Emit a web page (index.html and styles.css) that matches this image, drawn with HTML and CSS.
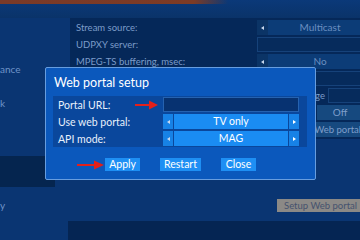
FILE: index.html
```html
<!DOCTYPE html>
<html lang="en">
<head>
    <meta charset="UTF-8">
    <meta name="viewport" content="width=device-width, initial-scale=1.0">
    <title>Web portal setup</title>
    <link rel="stylesheet" href="styles.css">
</head>
<body>

<div class="screen">
    <div class="top"><div class="glow"></div></div>

    <div class="main">
        <div class="menu">
            <div class="menu-item"></div>
            <div class="menu-item">ance</div>
            <div class="menu-item">k</div>
            <div class="menu-item"></div>
            <div class="menu-item"><div class="menu-sel"></div></div>
            <div class="menu-item">y</div>
        </div>

        <div class="settings">
            <div class="panel">
                <div class="row">
                    <div class="row-label">Stream source:</div>
                    <div class="row-value">
                        <div class="arrow-box"><span class="tri-left"></span></div>
                        <div class="value-box">Multicast</div>
                    </div>
                </div>
                <div class="row">
                    <div class="row-label">UDPXY server:</div>
                    <div class="row-value"><div class="input-box"></div></div>
                </div>
                <div class="row">
                    <div class="row-label">MPEG-TS buffering, msec:</div>
                    <div class="row-value">
                        <div class="arrow-box"><span class="tri-left"></span></div>
                        <div class="value-box">No</div>
                    </div>
                </div>
                <div class="row">
                    <div class="row-label">Timeshift path:</div>
                    <div class="row-value"><div class="input-box"></div></div>
                </div>
                <div class="row row-wide">
                    <div class="row-label right">Use default storage</div>
                    <div class="row-value"><div class="input-box"></div></div>
                </div>
                <div class="row row-mid">
                    <div class="row-label">Web portal:</div>
                    <div class="row-value"><div class="flat-box">Off</div></div>
                </div>
                <div class="row row-btn">
                    <div class="row-label">Web portal:</div>
                    <div class="row-value"><div class="flat-box left">Setup Web portal</div></div>
                </div>
            </div>

            <div class="action">
                <button class="grey-btn">Setup Web portal</button>
            </div>
            <div class="footer-bar"></div>
        </div>
    </div>

    <div class="dialog">
        <div class="dialog-title">Web portal setup</div>
        <div class="dialog-panel">
            <div class="drow">
                <div class="dlabel">
                    <span>Portal URL:</span>
                    <svg class="red-arrow" width="23" height="10" viewBox="0 0 23 10">
                        <rect x="0" y="4" width="16" height="2" fill="#e3201b"/>
                        <polygon points="14,0.5 23,5 14,9.5" fill="#e3201b"/>
                    </svg>
                </div>
                <div class="dinput"></div>
            </div>
            <div class="drow">
                <div class="dlabel"><span>Use web portal:</span></div>
                <div class="dselect">
                    <div class="darrow"><span class="tri-left"></span></div>
                    <div class="dvalue">TV only</div>
                    <div class="darrow"><span class="tri-right"></span></div>
                </div>
            </div>
            <div class="drow">
                <div class="dlabel"><span>API mode:</span></div>
                <div class="dselect">
                    <div class="darrow"><span class="tri-left"></span></div>
                    <div class="dvalue">MAG</div>
                    <div class="darrow"><span class="tri-right"></span></div>
                </div>
            </div>
        </div>
        <div class="dialog-buttons">
            <svg class="apply-arrow" width="27" height="10" viewBox="0 0 27 10">
                <rect x="0" y="4" width="19" height="2" fill="#e3201b"/>
                <polygon points="17,0.5 27,5 17,9.5" fill="#e3201b"/>
            </svg>
            <button class="dbtn">Apply</button>
            <button class="dbtn">Restart</button>
            <button class="dbtn">Close</button>
        </div>
    </div>
</div>

</body>
</html>
```

FILE: styles.css
```css
body {
    margin: 0;
    font-family: Lato, "Open Sans", sans-serif;
    background: #0a3572;
}
.screen {
    position: relative;
    width: 360px;
    height: 240px;
    overflow: hidden;
    background: #0a3572;
}
.top {
    height: 18px;
    background: linear-gradient(#0b3979, #0a3369);
}
.glow {
    width: 228px;
    height: 4px;
    background: linear-gradient(90deg, #7a3a28 0%, #7d3b25 85%, rgba(125, 59, 37, 0));
}
.main {
    display: flex;
    height: 222px;
}

/* left menu, cut by the screen edge */
.menu {
    width: 68px;
    flex: none;
    display: flex;
    flex-direction: column;
}
.menu-item {
    height: 34px;
    display: flex;
    align-items: center;
    font-size: 10px;
    color: #6f94c8;
}
.menu-sel {
    width: 55px;
    height: 31px;
    background: #05254f;
}

/* settings list behind the dialog */
.settings {
    flex: 1;
    margin-left: 2px;
    display: flex;
    flex-direction: column;
    min-width: 0;
}
.panel {
    background: #052859;
    padding: 2px 0;
    display: flex;
    flex-direction: column;
    gap: 2px;
}
.row {
    display: grid;
    grid-template-columns: 187px 1fr;
    height: 15px;
    align-items: center;
}
.row-wide { grid-template-columns: 258px 1fr; }
.row-mid { grid-template-columns: 247px 1fr; }
.row-btn { grid-template-columns: 213px 1fr; }
.row-label {
    padding-left: 6px;
    font-size: 9.5px;
    color: #7c9cc9;
    white-space: nowrap;
    overflow: hidden;
}
.row-label.right {
    text-align: right;
    padding-right: 3px;
}
.row-value {
    display: flex;
    height: 15px;
}
.arrow-box {
    width: 11px;
    flex: none;
    background: #0b3466;
    display: flex;
    align-items: center;
    justify-content: center;
}
.value-box {
    width: 104px;
    flex: none;
    background: #0c3c77;
    color: #6b8fc0;
    font-size: 10px;
    line-height: 15px;
    text-align: center;
}
.input-box {
    width: 120px;
    flex: none;
    box-sizing: border-box;
    background: #062b5c;
    border: 1px solid #16427a;
}
.flat-box {
    width: 46px;
    flex: none;
    background: #16497f;
    color: #7e9ecb;
    font-size: 10px;
    line-height: 15px;
    text-align: center;
}
.flat-box.left {
    width: 100px;
    text-align: left;
    padding-left: 5px;
    font-size: 9.5px;
    white-space: nowrap;
}
.tri-left {
    width: 0;
    height: 0;
    border-top: 2.5px solid transparent;
    border-bottom: 2.5px solid transparent;
    border-right: 3px solid #c9d8ee;
}
.tri-right {
    width: 0;
    height: 0;
    border-top: 2.5px solid transparent;
    border-bottom: 2.5px solid transparent;
    border-left: 3px solid #ffffff;
}
.action {
    margin-top: 60px;
    padding-left: 207px;
}
.grey-btn {
    display: block;
    height: 13px;
    width: 90px;
    padding: 0 0 0 7px;
    border: none;
    background: #8b8986;
    color: #45526e;
    font-family: Lato, "Open Sans", sans-serif;
    font-size: 9.5px;
    line-height: 13px;
    text-align: left;
    white-space: nowrap;
}
.footer-bar {
    margin-top: 9px;
    margin-left: -2px;
    height: 20px;
    background: #052553;
}

/* dialog */
.dialog {
    position: absolute;
    left: 45px;
    top: 67px;
    width: 271px;
    height: 113px;
    box-sizing: border-box;
    border: 1px solid #679ddf;
    border-radius: 2px;
    background: #0b58bc;
}
.dialog-title {
    height: 28px;
    padding-left: 8px;
    font-size: 12.5px;
    line-height: 29px;
    color: #ffffff;
}
.dialog-panel {
    margin: 0 8px 0 7px;
    padding: 1px 8px 1px 0;
    background: #0a479c;
    display: flex;
    flex-direction: column;
    gap: 2px;
}
.drow {
    display: flex;
    height: 15px;
}
.dlabel {
    width: 110px;
    flex: none;
    display: flex;
    align-items: center;
    justify-content: space-between;
    padding-left: 5px;
    box-sizing: border-box;
    font-size: 10.5px;
    color: #e8f0fb;
}
.red-arrow {
    margin-right: 5px;
}
.dinput {
    flex: 1;
    box-sizing: border-box;
    background: #073271;
    border: 1px solid #2562b0;
}
.dselect {
    flex: 1;
    display: flex;
    gap: 1px;
}
.darrow {
    width: 10px;
    background: #1782e6;
    display: flex;
    align-items: center;
    justify-content: center;
}
.dvalue {
    flex: 1;
    background: #1a8cf3;
    color: #ffffff;
    font-size: 10.5px;
    line-height: 15px;
    text-align: center;
}
.dialog-buttons {
    position: relative;
    margin-top: 11px;
    display: flex;
    justify-content: center;
    gap: 20px;
}
.apply-arrow {
    position: absolute;
    left: 31px;
    top: 2px;
}
.dbtn {
    height: 13px;
    min-width: 35px;
    padding: 0 4px;
    border: none;
    background: #1e8ff4;
    color: #ffffff;
    font-family: Lato, "Open Sans", sans-serif;
    font-size: 10.5px;
    line-height: 13px;
}
```
